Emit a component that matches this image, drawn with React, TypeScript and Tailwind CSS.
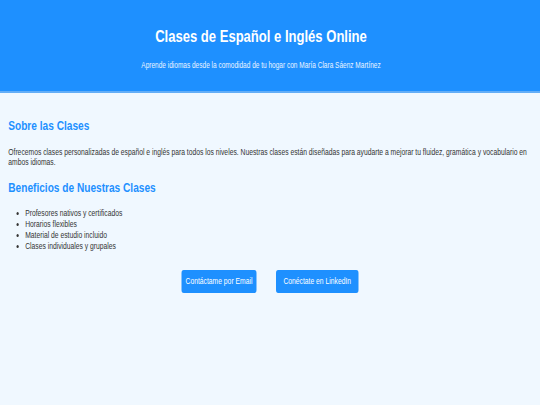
export default function App() {
  const font = { fontFamily: '"Liberation Sans", Arial, sans-serif' };
  return (
    <div className="w-[540px] h-[405px] overflow-hidden bg-[#f0f8ff]">
      <div className="w-[720px] h-[405px] origin-top-left scale-x-75 bg-[#f0f8ff] text-[#333]" style={font}>
        <header className="h-[93px] pr-[24px] bg-[#1e90ff] border-b-[2px] border-[#63aef7] flex flex-col items-center text-white">
          <h1 className="mt-[25px] text-[17.4px] font-bold leading-[22px]">Clases de Español e Inglés Online</h1>
          <p className="mt-[13px] text-[8.7px] leading-[11px] text-[#eaf4ff]">Aprende idiomas desde la comodidad de tu hogar con María Clara Sáenz Martínez</p>
        </header>
        <main className="px-[11px]">
          <h2 className="mt-[25px] text-[13.5px] font-bold leading-[16px] text-[#1e90ff]">Sobre las Clases</h2>
          <p className="mt-[12.5px] text-[9px] leading-[10.8px]">Ofrecemos clases personalizadas de español e inglés para todos los niveles. Nuestras clases están diseñadas para ayudarte a mejorar tu fluidez, gramática y vocabulario en ambos idiomas.</p>
          <h2 className="mt-[11.5px] text-[13.5px] font-bold leading-[16px] text-[#1e90ff]">Beneficios de Nuestras Clases</h2>
          <ul className="mt-[12.5px] pl-[22.5px] list-disc text-[9px] leading-[11px]">
            <li>Profesores nativos y certificados</li>
            <li>Horarios flexibles</li>
            <li>Material de estudio incluido</li>
            <li>Clases individuales y grupales</li>
          </ul>
          <div className="mt-[18px] flex justify-center gap-[26px]">
            <a className="w-[100px] h-[23px] flex items-center justify-center bg-[#1e90ff] rounded-[3px] text-white text-[9px]">Contáctame por Email</a>
            <a className="w-[110px] h-[23px] flex items-center justify-center bg-[#1e90ff] rounded-[3px] text-white text-[9px]">Conéctate en LinkedIn</a>
          </div>
        </main>
      </div>
    </div>
  );
}
